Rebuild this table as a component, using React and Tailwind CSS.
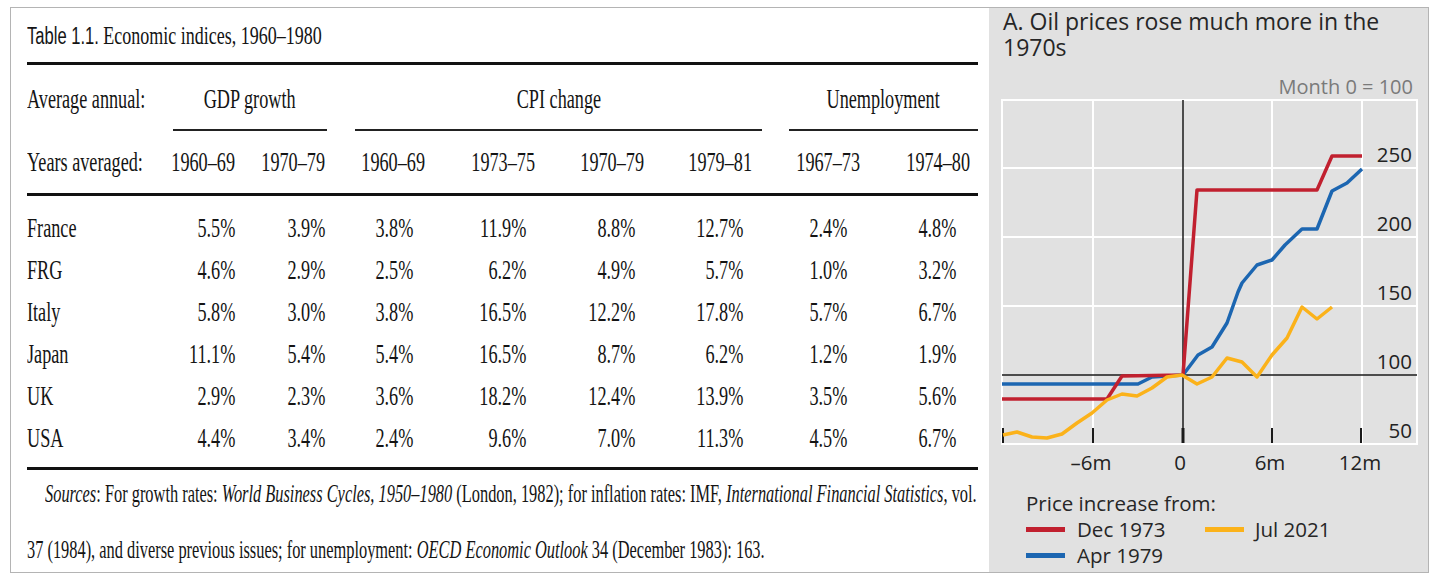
import React from "react";

const rows = [
  ["France", "5.5%", "3.9%", "3.8%", "11.9%", "8.8%", "12.7%", "2.4%", "4.8%"],
  ["FRG", "4.6%", "2.9%", "2.5%", "6.2%", "4.9%", "5.7%", "1.0%", "3.2%"],
  ["Italy", "5.8%", "3.0%", "3.8%", "16.5%", "12.2%", "17.8%", "5.7%", "6.7%"],
  ["Japan", "11.1%", "5.4%", "5.4%", "16.5%", "8.7%", "6.2%", "1.2%", "1.9%"],
  ["UK", "2.9%", "2.3%", "3.6%", "18.2%", "12.4%", "13.9%", "3.5%", "5.6%"],
  ["USA", "4.4%", "3.4%", "2.4%", "9.6%", "7.0%", "11.3%", "4.5%", "6.7%"],
];

const years = ["1960–69", "1970–79", "1960–69", "1973–75", "1970–79", "1979–81", "1967–73", "1974–80"];

// right padding so values sit a bit left of the header years
const valPad = ["pr-0", "pr-0", "pr-[12px]", "pr-[9px]", "pr-[9px]", "pr-[9px]", "pr-[13px]", "pr-[22px]"];
const headPad = ["pr-0", "pr-0", "pr-0", "pr-0", "pr-0", "pr-0", "pr-0", "pr-[8px]"];

const cols = "grid grid-cols-[146px_62px_90px_100px_110px_109px_108px_108px_118px]";

// condensed look: the book face is narrow, so squeeze the serif
const Sq = ({ children, side = "origin-left" }) => (
  <span className={`inline-block whitespace-nowrap scale-x-[0.65] ${side}`}>{children}</span>
);

const TablePanel = () => {
  return (
    <div className="w-[978px] pl-[16px] text-[#141414] font-['Liberation_Serif',serif] text-[28px] leading-none">
      <div className="w-[951px]">
        {/* title */}
        <div className="h-[54px] flex items-center">
          <span className="inline-block whitespace-nowrap origin-left scale-x-[0.72]">
            <span className="font-['Liberation_Sans',sans-serif] text-[23px]">Table 1.1.</span>
            <span className="text-[25px]"> Economic indices, 1960–1980</span>
          </span>
        </div>
        <div className="h-[3px] bg-[#111]" />

        {/* group headers */}
        <div className={cols}>
          <div className="h-[66px] pt-[4px] flex items-center border-b-2 border-transparent">
            <Sq>Average annual:</Sq>
          </div>
          <div className="col-span-2 h-[66px] pt-[4px] flex items-center justify-center border-b-2 border-[#222] mr-[-2px]">
            <Sq side="origin-center">GDP growth</Sq>
          </div>
          <div className="col-span-4 h-[66px] pt-[4px] flex items-center justify-center border-b-2 border-[#222] ml-[30px] mr-[-10px]">
            <Sq side="origin-center">CPI change</Sq>
          </div>
          <div className="col-span-2 h-[66px] pt-[4px] flex items-center justify-center border-b-2 border-[#222] ml-[37px]">
            <Sq side="origin-center">Unemployment</Sq>
          </div>
        </div>

        {/* years */}
        <div className={cols}>
          <div className="h-[62px] flex items-center">
            <Sq>Years averaged:</Sq>
          </div>
          {years.map((y, i) => (
            <div key={i} className={`h-[62px] flex items-center justify-end ${headPad[i]}`}>
              <Sq side="origin-right">{y}</Sq>
            </div>
          ))}
        </div>
        <div className="h-[3px] bg-[#111]" />

        {/* body */}
        <div className="pt-[11px] pb-[8px]">
          {rows.map((r) => (
            <div key={r[0]} className={cols}>
              <div className="h-[42px] flex items-center">
                <Sq>{r[0]}</Sq>
              </div>
              {r.slice(1).map((v, i) => (
                <div key={i} className={`h-[42px] flex items-center justify-end ${valPad[i]}`}>
                  <Sq side="origin-right">{v}</Sq>
                </div>
              ))}
            </div>
          ))}
        </div>
        <div className="h-[3px] bg-[#111]" />

        {/* sources */}
        <div className="flex flex-col gap-[11px] text-[25px]">
          <div className="h-[46px] flex items-center pl-[18px]">
            <span className="inline-block whitespace-nowrap origin-left scale-x-[0.655]">
              <i>Sources</i>: For growth rates: <i>World Business Cycles, 1950–1980</i> (London, 1982); for inflation rates: IMF,{" "}
              <i>International Financial Statistics</i>, vol.
            </span>
          </div>
          <div className="h-[44px] flex items-center">
            <span className="inline-block whitespace-nowrap origin-left scale-x-[0.655]">
              37 (1984), and diverse previous issues; for unemployment: <i>OECD Economic Outlook</i> 34 (December 1983): 163.
            </span>
          </div>
        </div>
      </div>
    </div>
  );
};

const red = [
  [1002, 399], [1107, 399], [1122, 376], [1183, 375], [1197, 190], [1317, 190], [1332, 156], [1362, 156],
];
const blue = [
  [1002, 384], [1138, 384], [1152, 377], [1183, 375], [1198, 355], [1212, 347], [1227, 323], [1238, 292],
  [1242, 283], [1257, 265], [1272, 260], [1285, 245], [1302, 229], [1317, 229], [1332, 191], [1347, 183], [1362, 169],
];
const orange = [
  [1003, 435], [1017, 432], [1032, 437], [1047, 438], [1062, 434], [1077, 423], [1092, 413], [1107, 400],
  [1122, 394], [1137, 396], [1152, 388], [1167, 377], [1182, 375], [1197, 384], [1212, 377], [1227, 358],
  [1242, 362], [1257, 377], [1272, 355], [1287, 338], [1302, 307], [1317, 319], [1332, 307],
];

const pts = (a) => a.map((p) => p.join(",")).join(" ");

const ChartPanel = () => {
  const hLines = [168, 237, 306];
  const vLines = [1093, 1272, 1362];
  const yLabels = [
    ["250", 168],
    ["200", 237],
    ["150", 306],
    ["100", 375],
    ["50", 444],
  ];
  const xLabels = [
    ["–6m", 1091],
    ["0", 1180],
    ["6m", 1270],
    ["12m", 1360],
  ];

  return (
    <div className="w-[439px] bg-[#e1e1e1] font-['Open_Sans',sans-serif] text-[#262626]">
      <div className="pl-[14px] text-[23px] leading-[26px] h-[52px]">
        <div className="h-[26px] whitespace-nowrap">A. Oil prices rose much more in the</div>
        <div className="h-[26px]">1970s</div>
      </div>

      <svg width="439" height="420" viewBox="989 60 439 420" className="block">
        <text x="1413" y="94" textAnchor="end" fontSize="20" fill="#7a7a7a" fontFamily="Open Sans">
          Month 0 = 100
        </text>

        {/* grid */}
        <rect x="1002" y="100" width="415" height="344" fill="none" stroke="#ffffff" strokeWidth="2" />
        {hLines.map((y) => (
          <line key={y} x1="1002" x2="1417" y1={y} y2={y} stroke="#ffffff" strokeWidth="2" />
        ))}
        {vLines.map((x) => (
          <line key={x} x1={x} x2={x} y1="100" y2="444" stroke="#ffffff" strokeWidth="2" />
        ))}

        {/* axes */}
        <line x1="1002" x2="1417" y1="375" y2="375" stroke="#1a1a1a" strokeWidth="1.5" />
        <line x1="1183" x2="1183" y1="100" y2="443" stroke="#1a1a1a" strokeWidth="1.5" />
        {[1003, 1093, 1183, 1272, 1361].map((x) => (
          <line key={x} x1={x} x2={x} y1="428" y2="443" stroke="#1a1a1a" strokeWidth={x === 1183 ? 3 : 2} />
        ))}

        {yLabels.map(([t, y]) => (
          <text key={t} x="1412" y={y - 6} textAnchor="end" fontSize="20.5" fill="#222" fontFamily="Open Sans">
            {t}
          </text>
        ))}
        {xLabels.map(([t, x]) => (
          <text key={t} x={x} y="470" textAnchor="middle" fontSize="20.5" fill="#222" fontFamily="Open Sans">
            {t}
          </text>
        ))}

        <polyline points={pts(blue)} fill="none" stroke="#1c66b1" strokeWidth="3.5" strokeLinejoin="round" />
        <polyline points={pts(red)} fill="none" stroke="#c1202f" strokeWidth="3.5" strokeLinejoin="round" />
        <polyline points={pts(orange)} fill="none" stroke="#fbb21a" strokeWidth="3.5" strokeLinejoin="round" />
      </svg>

      {/* legend */}
      <div className="pl-[37px] pt-[10px] text-[20.5px] leading-[26px]">
        <div>Price increase from:</div>
        <div className="grid grid-cols-[179px_auto]">
          <div className="flex items-center gap-[12px]">
            <span className="w-[39px] h-[5px] bg-[#c1202f]" />
            Dec 1973
          </div>
          <div className="flex items-center gap-[11px]">
            <span className="w-[39px] h-[5px] bg-[#fbb21a]" />
            Jul 2021
          </div>
          <div className="flex items-center gap-[12px]">
            <span className="w-[39px] h-[5px] bg-[#1c66b1]" />
            Apr 1979
          </div>
        </div>
      </div>
    </div>
  );
};

const App = () => {
  return (
    <div className="w-[1438px] h-[587px] bg-white pt-[7px] pl-[10px]">
      <div className="flex h-[566px] w-[1419px] border border-[#b4b4b4]">
        <TablePanel />
        <ChartPanel />
      </div>
    </div>
  );
};

export default App;
